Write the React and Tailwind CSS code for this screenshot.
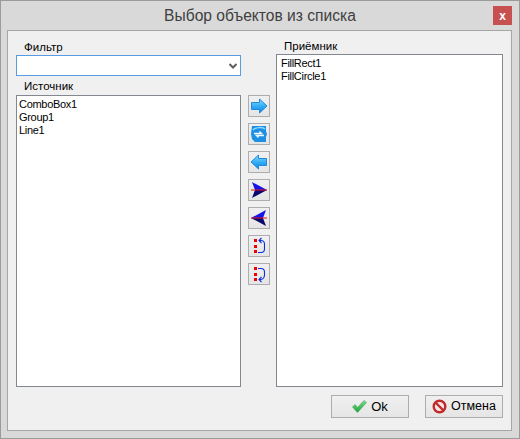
const font = { fontFamily: '"Liberation Sans", Arial, sans-serif' };

function ArrowRight() {
  return (
    <svg width="18" height="16" viewBox="0 0 18 16">
      <defs>
        <linearGradient id="blue" x1="0" y1="0" x2="0" y2="1">
          <stop offset="0" stopColor="#8adcff" />
          <stop offset="0.5" stopColor="#36aef5" />
          <stop offset="1" stopColor="#0a84e6" />
        </linearGradient>
      </defs>
      <path d="M1.500 4.500H9.500V1L17 8L9.500 15V11.500H1.500Z" fill="url(#blue)" stroke="#1f8be0" strokeWidth="1" />
    </svg>
  );
}

function ArrowLeft() {
  return (
    <svg width="18" height="16" viewBox="0 0 18 16">
      <path d="M16.500 4.500H8.500V1L1 8L8.500 15V11.500H16.500Z" fill="url(#blue)" stroke="#1f8be0" strokeWidth="1" />
    </svg>
  );
}

function Swap() {
  return (
    <svg width="18" height="18" viewBox="0 0 18 18">
      <path d="M2 1H16V6L17 9L16 12V17H5L2 14L1 9Z" fill="#1f8fe4" />
      <path d="M3 5C5 2 13 2 15 4" fill="none" stroke="#8adcff" strokeWidth="1.500" />
      <path d="M4 8.500H11.500L9.500 6.500M14 10.500H6.500L8.500 12.500" fill="none" stroke="#f0faff" strokeWidth="1.400" />
    </svg>
  );
}

function Dart({ left }) {
  return (
    <svg width="18" height="18" viewBox="0 0 18 18" className={left ? "-scale-x-100" : ""}>
      <path d="M2 1L17 9H5Z" fill="#1515e8" />
      <path d="M2 17L17 9H5Z" fill="#08086e" />
      <path d="M1 9H17" stroke="#f01010" strokeWidth="1" />
    </svg>
  );
}

function Loop({ down }) {
  return (
    <svg width="16" height="18" viewBox="0 0 16 18">
      <rect x="3" y="2" width="3" height="3" fill="#f00000" />
      <rect x="3" y="8" width="3" height="3" fill="#f00000" />
      <rect x="3" y="13" width="3" height="3" fill="#f00000" />
      {down ? (
        <path d="M7 3.500H10C12 3.500 13.500 5 13.500 7V10C13.500 12 12 14.500 10 14.500H8M10.500 12L8 14.500L10.500 17" fill="none" stroke="#0a30e0" strokeWidth="1.100" />
      ) : (
        <path d="M7 15.500H10C12 15.500 13.500 14 13.500 12V7C13.500 5 12 3.500 10 3.500H8M10.500 1L8 3.500L10.500 6" fill="none" stroke="#0a30e0" strokeWidth="1.100" />
      )}
    </svg>
  );
}

function ToolButton({ children }) {
  return (
    <button className="flex h-[22px] w-[22px] items-center justify-center border border-[#adadad] bg-gradient-to-b from-[#f0f0f0] to-[#e5e5e5]">
      {children}
    </button>
  );
}

function ListBox({ items, className }) {
  return (
    <div className={"border border-[#828790] bg-white pl-[2px] pt-[2px] text-[11px] leading-[13px] tracking-[-0.3px] text-black " + className}>
      {items.map((item) => (
        <div key={item}>{item}</div>
      ))}
    </div>
  );
}

function App() {
  return (
    <div style={font} className="flex h-[439px] w-[520px] flex-col border border-[#9b9b9b] bg-[#d9d9d9] pb-[7px] pl-[6px] pr-[7px]">
      {/* Title bar */}
      <div className="relative flex h-[29px] shrink-0 items-center justify-center pl-[1px] text-[15.6px] text-[#404040]">
        Выбор объектов из списка
        <div className="absolute right-[0px] top-[5px] flex h-[19px] w-[19px] items-center justify-center bg-[#c75050] text-[12px] font-bold leading-none text-white">
          x
        </div>
      </div>

      {/* Content */}
      <div className="flex flex-1 flex-col border border-[#a6a6a6] bg-[#f0f0f0] pl-[8px] pr-[8px]">
        <div className="flex flex-1 pt-[8px]">
          {/* Left column */}
          <div className="flex w-[225px] flex-col">
            <div className="pl-[8px] text-[11.500px] leading-[16px] text-black">Фильтр</div>
            <div className="flex h-[21px] items-center justify-end border border-[#569de5] bg-white pr-[3px]">
              <svg width="8" height="6" viewBox="0 0 8 6">
                <path d="M0.500 1L4 4.500L7.500 1" fill="none" stroke="#606060" strokeWidth="2" />
              </svg>
            </div>
            <div className="pl-[8px] pt-[2px] text-[11.500px] leading-[17px] text-black">Источник</div>
            <ListBox items={["ComboBox1", "Group1", "Line1"]} className="flex-1" />
          </div>

          {/* Transfer buttons */}
          <div className="flex w-[35px] flex-col items-center gap-[6px] pt-[56px]">
            <ToolButton><ArrowRight /></ToolButton>
            <ToolButton><Swap /></ToolButton>
            <ToolButton><ArrowLeft /></ToolButton>
            <ToolButton><Dart /></ToolButton>
            <ToolButton><Dart left /></ToolButton>
            <ToolButton><Loop /></ToolButton>
            <ToolButton><Loop down /></ToolButton>
          </div>

          {/* Right column */}
          <div className="flex w-[227px] flex-col">
            <div className="pl-[8px] text-[11.500px] leading-[15px] text-black">Приёмник</div>
            <ListBox items={["FillRect1", "FillCircle1"]} className="flex-1 pl-[4px]" />
          </div>
        </div>

        {/* Footer */}
        <div className="flex h-[43px] shrink-0 items-start justify-end gap-[16px] pt-[8px]">
          <button className="flex h-[23px] w-[78px] items-center justify-center gap-[4px] border border-[#adadad] bg-gradient-to-b from-[#f0f0f0] to-[#e5e5e5] text-[13px] text-black">
            <svg width="15" height="13" viewBox="0 0 15 13">
              <defs>
                <linearGradient id="green" x1="0" y1="0" x2="0" y2="1">
                  <stop offset="0" stopColor="#7fe08a" />
                  <stop offset="1" stopColor="#1f9e3c" />
                </linearGradient>
              </defs>
              <path d="M0.500 7L3 4.500L5.500 7.500L12 0.500L14.500 2.500L5.500 12.500Z" fill="url(#green)" stroke="#2a9a42" strokeWidth="0.500" />
            </svg>
            Ok
          </button>
          <button className="flex h-[23px] w-[78px] items-center justify-center gap-[4px] border border-[#adadad] bg-gradient-to-b from-[#f0f0f0] to-[#e5e5e5] text-[12.500px] text-black">
            <svg width="15" height="15" viewBox="0 0 15 15">
              <circle cx="7.500" cy="7.500" r="5.800" fill="#f6e6e6" stroke="#c02a2a" strokeWidth="2.400" />
              <path d="M3.500 3.500L11.500 11.500" stroke="#c02a2a" strokeWidth="2.400" />
            </svg>
            Отмена
          </button>
        </div>
      </div>
    </div>
  );
}

export default App;
